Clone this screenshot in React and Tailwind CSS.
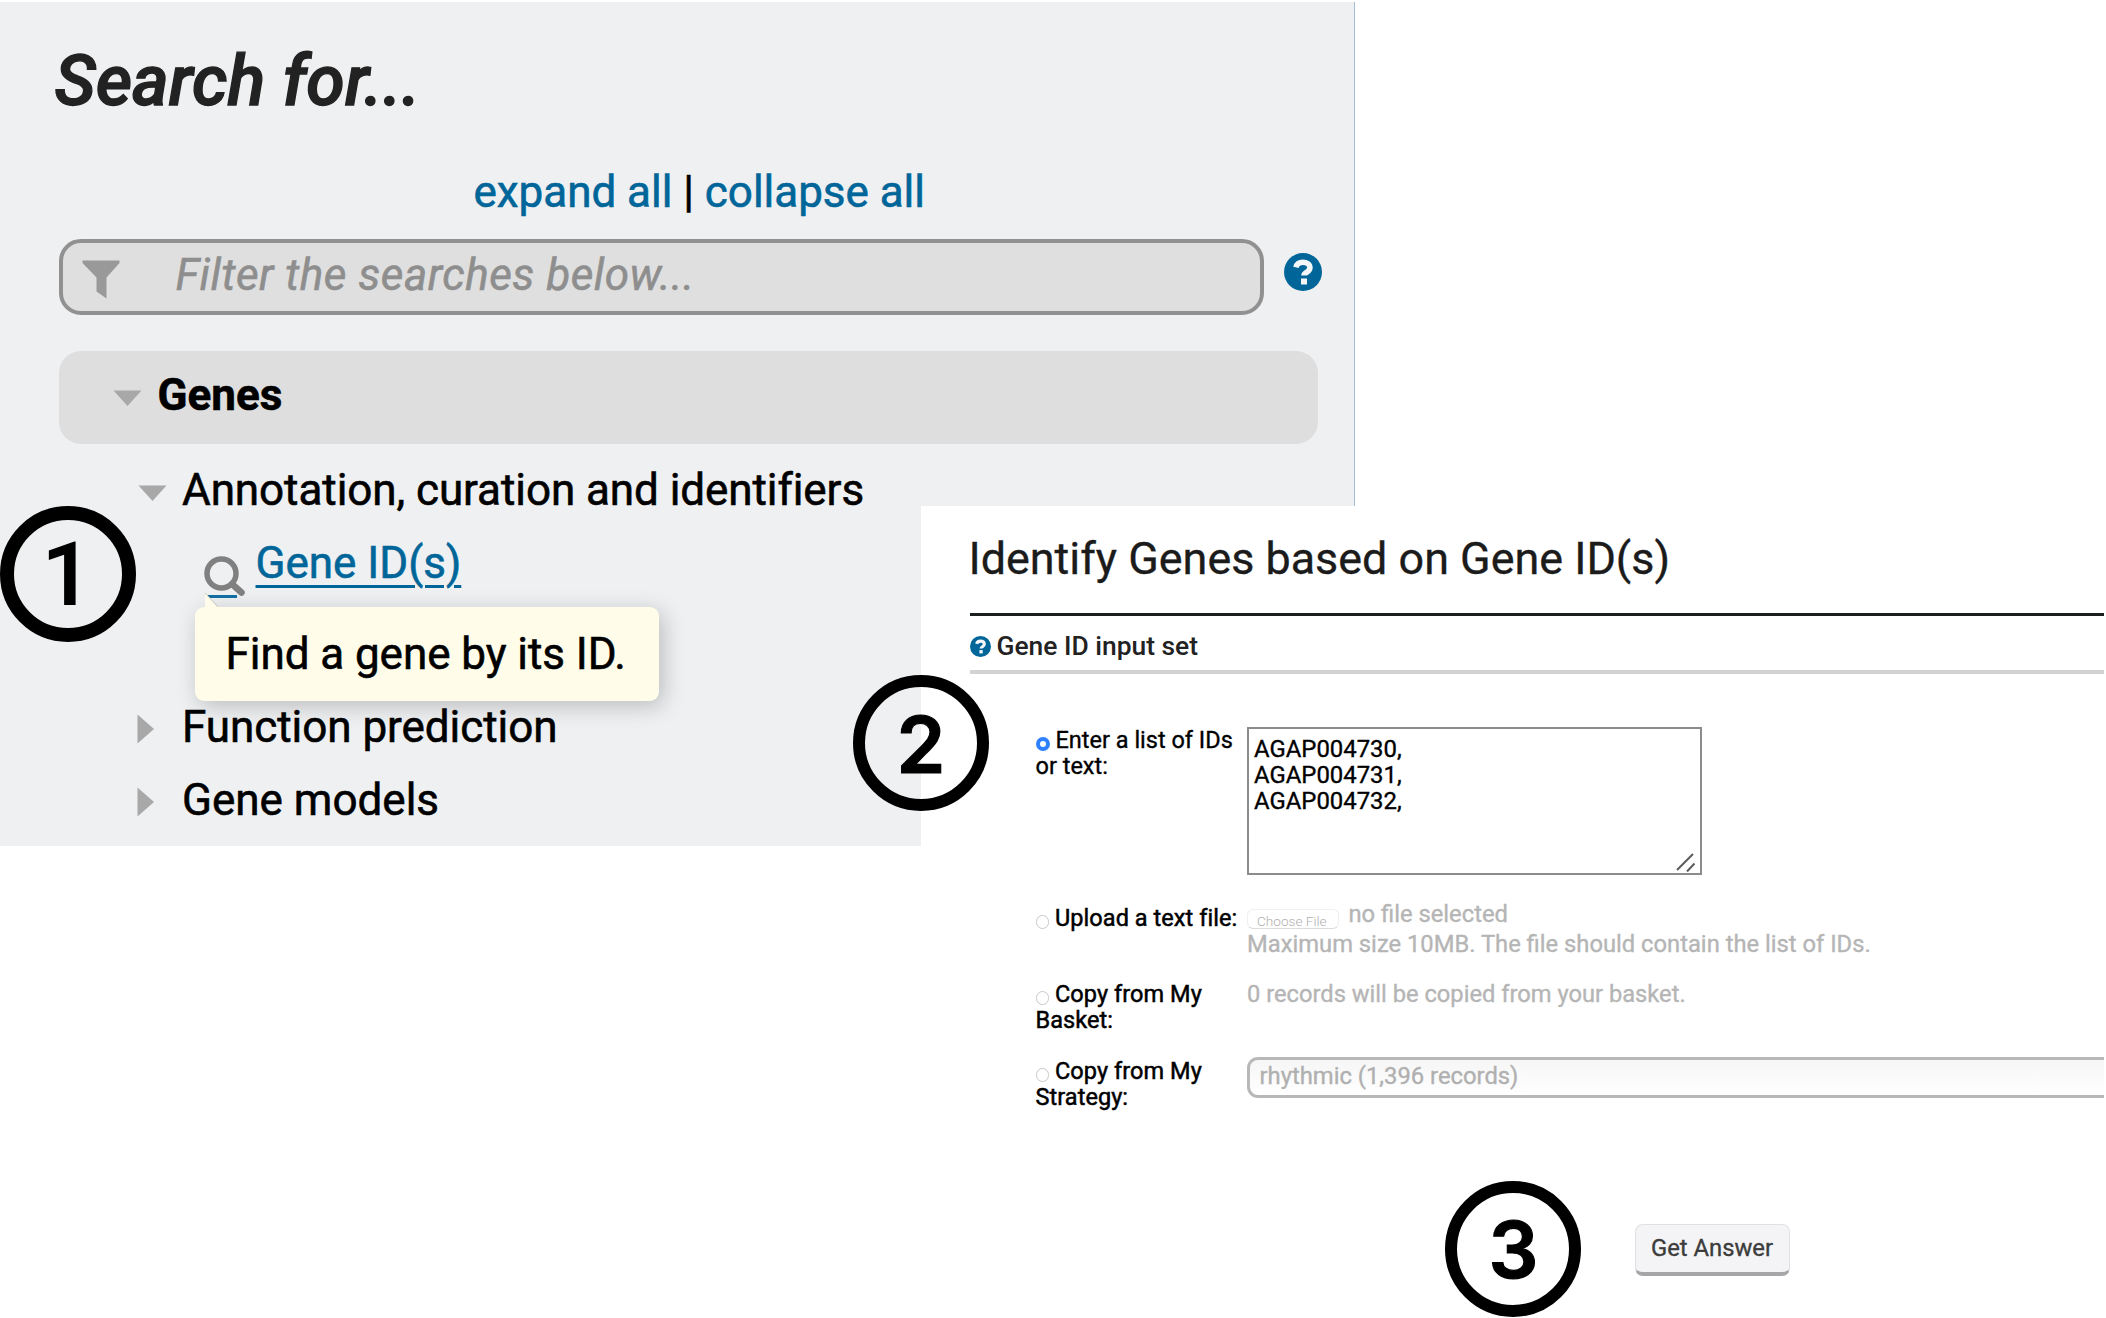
import React from "react";

function Triangle({ open, className = "" }) {
  return open ? (
    <svg viewBox="0 0 29 16" className={"h-[16px] w-[29px] " + className}>
      <path d="M0.5 0.5h28L14.5 16z" fill="#a8a8a8" />
    </svg>
  ) : (
    <svg viewBox="0 0 17 30" className={"h-[30px] w-[17px] " + className}>
      <path d="M0.5 0.5L17 15L0.5 29.5z" fill="#a8a8a8" />
    </svg>
  );
}

function HelpIcon({ className }) {
  return (
    <svg viewBox="0 0 38 38" className={className}>
      <circle cx="19" cy="19" r="19" fill="#069" />
      <path
        d="M12 14.300c.8-3.400 3.400-5 6.900-5 4 0 7 2.100 7 5.500 0 4.600-5.900 4.500-5.900 7.700"
        fill="none"
        stroke="#f4f6f8"
        strokeWidth="5.600"
      />
      <rect x="17" y="25.500" width="6" height="6" fill="#f4f6f8" />
    </svg>
  );
}

function FilterIcon() {
  return (
    <svg viewBox="0 0 38 39" className="h-[39px] w-[38px]">
      <path d="M0.500 0.500h37v2.500L24.500 17.500V38.500L14.500 31.500V17.500L0.500 3z" fill="#999" />
    </svg>
  );
}

function SearchIcon() {
  return (
    <svg viewBox="0 0 42 42" className="h-[42px] w-[42px]">
      <circle cx="17.500" cy="17.500" r="14.500" fill="none" stroke="#808080" strokeWidth="5.500" />
      <path d="M28 28l9.500 8.500" stroke="#808080" strokeWidth="6.500" strokeLinecap="round" />
    </svg>
  );
}

function Radio({ checked }) {
  return checked ? (
    <span className="mt-[10px] mr-[6px] h-[14px] w-[14px] shrink-0 rounded-full border-[4.500px] border-[#2f80ff] bg-white" />
  ) : (
    <span className="mt-[10px] mr-[6.500px] h-[14px] w-[13px] shrink-0 rounded-full border-[1.500px] border-[#c9c9c9] bg-white" />
  );
}

function Option({ checked, first, second, className }) {
  return (
    <div className={className}>
      <div className="flex whitespace-nowrap">
        <Radio checked={checked} />
        <span>{first}</span>
      </div>
      {second && <div>{second}</div>}
    </div>
  );
}

function Step({ n, className }) {
  return (
    <div
      className={
        "absolute flex h-[136px] w-[136px] items-center justify-center rounded-full border-black text-black " +
        className
      }
    >
      {n}
    </div>
  );
}

const label = "text-[23.500px] leading-[26.400px] text-black";
const bolder = " tracking-[0.060px] [-webkit-text-stroke:0.500px_currentColor]";

export default function App() {
  return (
    <div className="relative h-[1318px] w-[2106px] overflow-hidden bg-white font-[Roboto,sans-serif] text-black">
      <section className="mt-[2px] h-[844px] w-[1355px] border-r border-[#a3bdd4] bg-[#eff0f2] pt-[39px] pl-[59px] [-webkit-text-stroke:0.600px_currentColor]">
        <h1 className="-ml-[4.500px] text-[70px] leading-[80px] font-medium text-[#222] italic [-webkit-text-stroke:1.300px_currentColor]">
          Search for...
        </h1>

        <div className="mt-[45px] ml-[414.500px] text-[44px] leading-[52px] tracking-[-0.030px] whitespace-pre">
          <a className="text-[#069]">expand all</a>
          {" | "}
          <a className="text-[#069]">collapse all</a>
        </div>

        <div className="mt-[21px] flex">
          <div className="flex h-[76px] w-[1205px] rounded-[22px] border-4 border-[#919191] bg-[#dfdfdf]">
            <div className="mt-[17px] ml-[19px]">
              <FilterIcon />
            </div>
            <span className="mt-[6px] ml-[55.500px] text-[44px] leading-[52px] tracking-[0.520px] text-[#8e8e8e] italic">
              Filter the searches below...
            </span>
          </div>
          <HelpIcon className="mt-[14px] ml-[20px] h-[38px] w-[38px]" />
        </div>

        <div className="mt-[36px] flex h-[93px] w-[1259px] items-center rounded-[22px] bg-[#dedede] pl-[54px]">
          <Triangle open />
          <span className="ml-[15.500px] pb-[6px] text-[44px] leading-[52px] font-bold">Genes</span>
        </div>

        <div className="mt-[10px] text-[44px] leading-[73px]">
          <div className="flex pl-[79px]">
            <Triangle open className="mt-[31px]" />
            <span className="ml-[15px] tracking-[-0.070px]">Annotation, curation and identifiers</span>
          </div>
          <div className="flex pl-[145px]">
            <div className="mt-[29px] w-[42px]">
              <SearchIcon />
              <div className="-mt-[3px] ml-[4px] h-[3px] w-[29px] bg-[#1470a4]" />
            </div>
            <span className="ml-[9.500px] text-[#069] underline decoration-[3px] underline-offset-[7px]">
              Gene ID(s)
            </span>
          </div>
          <div className="mt-[91px] flex pl-[78px]">
            <Triangle className="mt-[23px]" />
            <span className="ml-[28px] tracking-[-0.050px]">Function prediction</span>
          </div>
          <div className="flex pl-[78px]">
            <Triangle className="mt-[23px]" />
            <span className="ml-[28px]">Gene models</span>
          </div>
        </div>
      </section>

      <div className="absolute top-[607px] left-[195px] h-[94px] w-[464px] rounded-[9px] bg-[#fffdea] pt-[21px] pl-[30.500px] text-[44px] leading-[52px] tracking-[-0.060px] whitespace-nowrap shadow-[4px_5px_22px_rgba(0,0,0,0.220)] [-webkit-text-stroke:0.600px_currentColor]">
        <svg viewBox="0 0 16 16" className="absolute -top-[14px] left-[9px] h-[16px] w-[16px]">
          <path d="M1 0L15 15H1z" fill="#fffdea" />
          <path d="M1 0L14 14" stroke="#c9c8bd" strokeWidth="1" />
        </svg>
        Find a gene by its ID.
      </div>

      <section className="absolute top-[506px] left-[921px] h-[812px] w-[1185px] bg-white pt-[26px] pr-[2px] pl-[48.500px] [-webkit-text-stroke:0.350px_currentColor]">
        <h2 className="-ml-[1px] text-[44.900px] leading-[54px] text-[#1b1b1b]">Identify Genes based on Gene ID(s)</h2>
        <div className="mt-[27px] h-[3px] bg-[#1c1f20]" />
        <div className="mt-[10px] flex text-[26.400px] leading-[40px] font-medium text-[#222] [-webkit-text-stroke:0px]">
          <HelpIcon className="mt-[10px] h-[21px] w-[21px]" />
          <span className="ml-[6px]">Gene ID input set</span>
        </div>
        <div className="mt-[4px] h-[4px] bg-[#d3d3d3]" />

        <div className="mt-[53px] ml-[66px] grid grid-cols-[211.500px_1fr] grid-rows-[177.500px_76.500px_76.500px_52px]">
          <Option checked first="Enter a list of IDs" second="or text:" className={label} />
          <div className="relative h-[148px] w-[455px] border-[2.500px] border-[#8c8c8c] bg-white pt-[7px] pl-[5px] text-[23.900px] leading-[26.200px]">
            <div>AGAP004730,</div>
            <div>AGAP004731,</div>
            <div>AGAP004732,</div>
            <svg viewBox="0 0 20 20" className="absolute right-[4px] bottom-0 h-[20px] w-[20px]">
              <path d="M1 17L17 1M11 18.500L18.500 10.500" stroke="#5c5c5c" strokeWidth="2" />
            </svg>
          </div>

          <Option first="Upload a text file:" className={label + bolder} />
          <div className="-mt-[4px] text-[23.750px] text-[#b5b5b5]">
            <div className="flex h-[28px] leading-[26px]">
              <span className="mt-[8px] h-[20px] w-[92px] rounded-[6px] border border-[#f0f0f0] border-b-[#dcdcdc] pl-[9px] text-[13.600px] leading-[23px] font-light text-[#b0b0b0] [-webkit-text-stroke:0px]">
                Choose File
              </span>
              <span className="ml-[9.500px]">no file selected</span>
            </div>
            <div className="leading-[30px] whitespace-nowrap">
              Maximum size 10MB. The file should contain the list of IDs.
            </div>
          </div>

          <Option first="Copy from My" second="Basket:" className={label + bolder} />
          <div className="text-[23.700px] leading-[26.400px] text-[#b5b5b5]">
            0 records will be copied from your basket.
          </div>

          <Option first="Copy from My" second="Strategy:" className={label + bolder} />
          <div className="-mt-[1px] h-[41px] rounded-l-[11px] border-[3px] border-r-0 border-[#b8b8b8] bg-linear-to-b from-[#f6f6f6] to-white pt-[3px] pl-[9.500px] text-[23.800px] leading-[26.400px] text-[#b0b0b0]">
            rhythmic (1,396 records)
          </div>
        </div>

        <button className="mt-[114px] ml-[665px] block h-[52px] w-[155px] rounded-[8px] border border-b-4 border-[#e0e0e2] border-b-[#a6a6a8] bg-[#f4f4f6] pb-[1px] text-[23.800px] leading-[44px] text-[#3c3c3c]">
          Get Answer
        </button>
      </section>

      <Step n="1" className="top-[506px] left-0 border-[14px] pt-[2px] pr-[2px] text-[89px] font-semibold" />
      <Step n="2" className="top-[675px] left-[853px] border-[12px] pt-[3px] font-[Inter] text-[78.500px] font-semibold [-webkit-text-stroke:1.200px_black]" />
      <Step n="3" className="top-[1181px] left-[1445px] border-[12px] pt-[2px] pl-[1px] font-[Inter] text-[78.500px] font-semibold [-webkit-text-stroke:1.200px_black]" />
    </div>
  );
}
